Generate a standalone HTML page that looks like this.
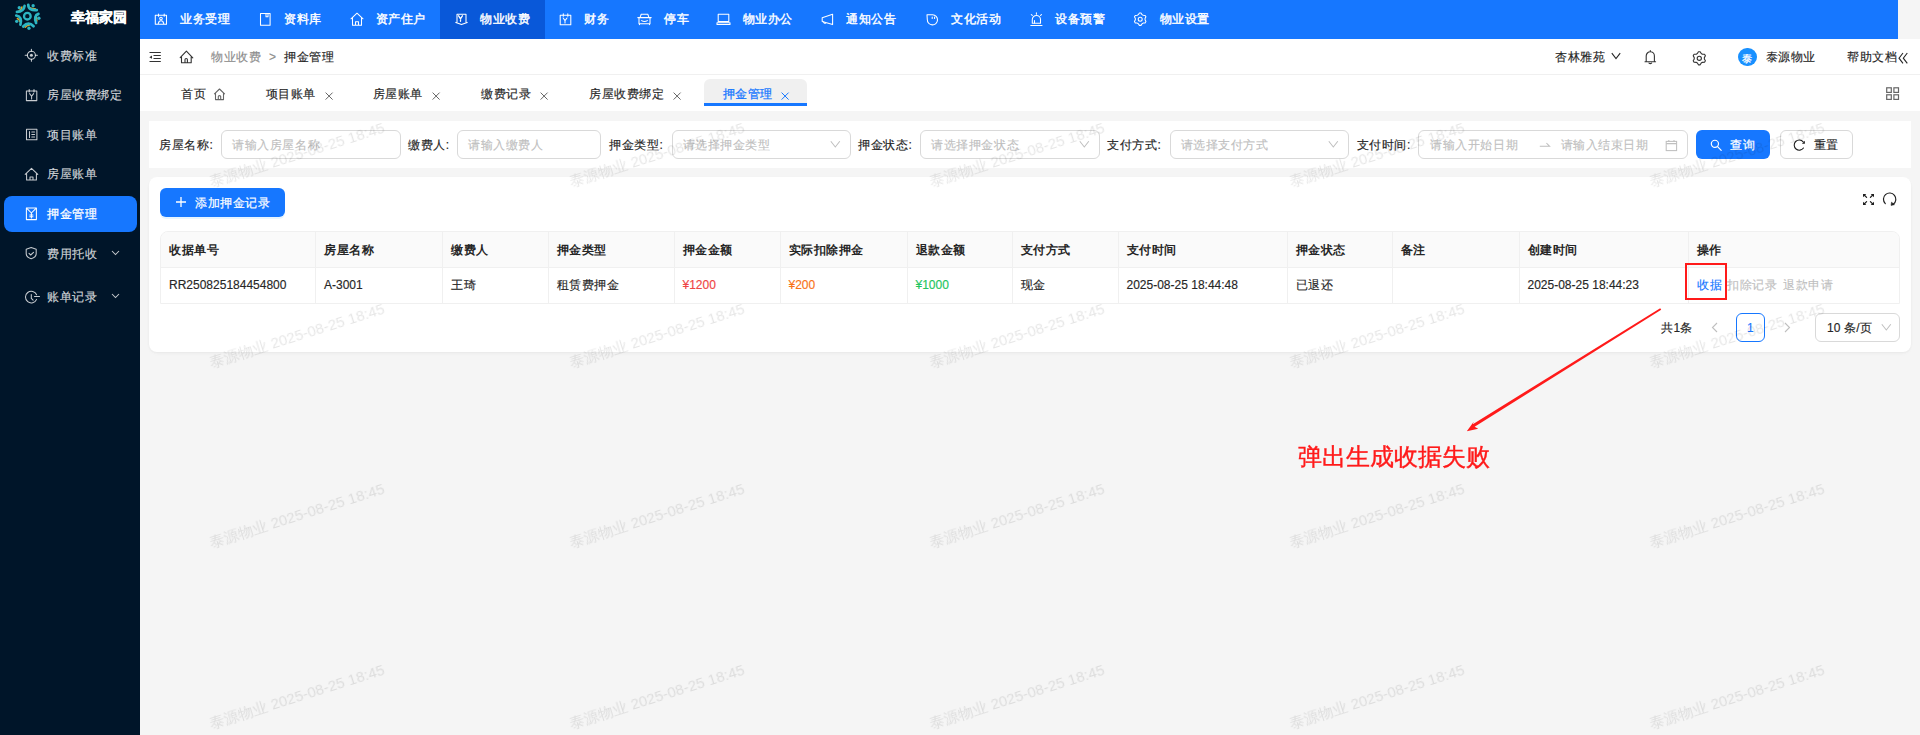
<!DOCTYPE html><html><head><meta charset="utf-8"><style>
*{box-sizing:border-box;margin:0;padding:0}
html,body{width:1920px;height:735px;overflow:hidden;background:#f5f5f5;font-family:"Liberation Sans",sans-serif;font-size:13px;color:#262626}
body{position:relative}
.a{position:absolute;white-space:nowrap}
.t{-webkit-text-stroke:0.15px currentColor}
svg.a{display:block;overflow:visible}
</style></head><body><div class="a" style="left:0px;top:0px;width:140px;height:735px;background:#001529"></div>
<div class="a" style="left:140px;top:0px;width:1758px;height:39px;background:#1677ff"></div>
<div class="a" style="left:140px;top:39px;width:1780px;height:72px;background:#fff"></div>
<div class="a" style="left:140px;top:74px;width:1780px;height:1px;background:#f0f0f0"></div>
<svg class="a" style="left:10px;top:0px;" width="40" height="34" viewBox="0 0 865 735"><g fill="none" stroke-linecap="round">
<path d="M258 150 Q 250 215 200 228" stroke="#e3a51e" stroke-width="34"/>
<path d="M440 170 Q 490 195 545 188" stroke="#e3a51e" stroke-width="34"/>
<path d="M560 345 Q 590 400 580 455" stroke="#e3a51e" stroke-width="34"/>
<path d="M330 590 Q 370 545 420 540" stroke="#e3a51e" stroke-width="34"/>
<path d="M160 400 Q 205 420 215 465" stroke="#e3a51e" stroke-width="34"/>
<circle cx="375" cy="350" r="72" stroke="#2cb5c4" stroke-width="50"/>
<path d="M315 125 Q 300 250 150 258" stroke="#2cb5c4" stroke-width="58"/>
<path d="M395 105 Q 395 235 580 218" stroke="#2cb5c4" stroke-width="58"/>
<path d="M615 300 Q 505 340 565 495" stroke="#2cb5c4" stroke-width="58"/>
<path d="M285 572 Q 400 450 510 568" stroke="#2cb5c4" stroke-width="58"/>
<path d="M135 335 Q 275 365 225 535" stroke="#2cb5c4" stroke-width="58"/>
</g><g fill="#2cb5c4"><circle cx="200" cy="165" r="36"/><circle cx="500" cy="125" r="36"/><circle cx="625" cy="395" r="36"/><circle cx="410" cy="610" r="36"/><circle cx="145" cy="462" r="36"/></g></svg>
<div class="a" style="left:70.5px;top:8.5px;font-size:14px;line-height:16px;color:#fff;font-weight:bold;-webkit-text-stroke:0.35px #fff">幸福家园</div>
<div class="a" style="left:4px;top:196px;width:133px;height:36px;background:#1677ff;border-radius:8px"></div>
<svg class="a" style="left:24px;top:48px;color:rgba(255,255,255,0.78)" width="16" height="16" viewBox="0 0 16 16"><circle cx="7.4" cy="7.2" r="4" stroke="currentColor" stroke-width="1.05" fill="none" stroke-linejoin="round" stroke-linecap="round"/><circle cx="7.4" cy="7.2" r="1.5" fill="currentColor"/><path d="M7.4 1.2v2M7.4 11.2v2M1.2 7.2h2M11.4 7.2h2" stroke="currentColor" stroke-width="1.05" fill="none" stroke-linejoin="round" stroke-linecap="round"/></svg>
<div class="a t" style="left:47px;top:48px;font-size:12px;line-height:16px;color:rgba(255,255,255,0.78);font-weight:normal;"><span style="letter-spacing:0.6px">收费标准</span></div>
<svg class="a" style="left:24px;top:88px;color:rgba(255,255,255,0.78)" width="16" height="16" viewBox="0 0 16 16"><rect x="2.4" y="3" width="10.4" height="9.6" stroke="currentColor" stroke-width="1.05" fill="none" stroke-linejoin="round" stroke-linecap="round"/><path d="M5.2 1.6v2.4M10 1.6v2.4M5.6 5.6l2 2.6 2-2.6M7.6 8.2v2.8" stroke="currentColor" stroke-width="1.05" fill="none" stroke-linejoin="round" stroke-linecap="round"/></svg>
<div class="a t" style="left:47px;top:87px;font-size:12px;line-height:16px;color:rgba(255,255,255,0.78);font-weight:normal;"><span style="letter-spacing:0.6px">房屋收费绑定</span></div>
<svg class="a" style="left:24px;top:127px;color:rgba(255,255,255,0.78)" width="16" height="16" viewBox="0 0 16 16"><rect x="2.5" y="2.2" width="10.4" height="10.6" stroke="currentColor" stroke-width="1.05" fill="none" stroke-linejoin="round" stroke-linecap="round"/><path d="M5.5 4.5v6M7.8 5h2.8M7.8 7.5h2.8M7.8 10h2.8" stroke="currentColor" stroke-width="1.05" fill="none" stroke-linejoin="round" stroke-linecap="round"/></svg>
<div class="a t" style="left:47px;top:127px;font-size:12px;line-height:16px;color:rgba(255,255,255,0.78);font-weight:normal;"><span style="letter-spacing:0.6px">项目账单</span></div>
<svg class="a" style="left:24px;top:167px;color:rgba(255,255,255,0.78)" width="16" height="16" viewBox="0 0 16 16"><path d="M1.2 7.4L7.5 1.4l6.3 6M2.6 6.2V13h9.8V6.2M6 13v-3h3v3" stroke="currentColor" stroke-width="1.05" fill="none" stroke-linejoin="round" stroke-linecap="round"/></svg>
<div class="a t" style="left:47px;top:166px;font-size:12px;line-height:16px;color:rgba(255,255,255,0.78);font-weight:normal;"><span style="letter-spacing:0.6px">房屋账单</span></div>
<svg class="a" style="left:24px;top:206px;color:#fff" width="16" height="16" viewBox="0 0 16 16"><rect x="2.4" y="2" width="10" height="11.6" stroke="currentColor" stroke-width="1.05" fill="none" stroke-linejoin="round" stroke-linecap="round"/><path d="M2.8 2.4L7.4 7l4.6-4.6M7.4 7v5M5.8 9h3.2M5.8 10.8h3.2" stroke="currentColor" stroke-width="1.05" fill="none" stroke-linejoin="round" stroke-linecap="round"/></svg>
<div class="a" style="left:47px;top:206px;font-size:12px;line-height:16px;color:#fff;font-weight:normal;-webkit-text-stroke:0.3px #fff"><span style="letter-spacing:0.6px">押金管理</span></div>
<svg class="a" style="left:24px;top:246px;color:rgba(255,255,255,0.78)" width="16" height="16" viewBox="0 0 16 16"><path d="M7.2 1.6L12.2 3.2V7.6c0 2.6-2 4.2-5 5.1-3-0.9-5-2.5-5-5.1V3.2z" stroke="currentColor" stroke-width="1.05" fill="none" stroke-linejoin="round" stroke-linecap="round"/><path d="M5 7.4l1.7 1.6L9.5 6.4" stroke="currentColor" stroke-width="1.05" fill="none" stroke-linejoin="round" stroke-linecap="round"/></svg>
<div class="a t" style="left:47px;top:246px;font-size:12px;line-height:16px;color:rgba(255,255,255,0.78);font-weight:normal;"><span style="letter-spacing:0.6px">费用托收</span></div>
<svg class="a" style="left:111px;top:250px;color:rgba(255,255,255,0.78)" width="9" height="6" viewBox="0 0 9 6"><path d="M1 1l3.5 3.5L8 1" stroke="currentColor" stroke-width="1.05" fill="none"/></svg>
<svg class="a" style="left:24px;top:290px;color:rgba(255,255,255,0.78)" width="16" height="16" viewBox="0 0 16 16"><path d="M12.6 4.8A5.8 5.8 0 1 0 12.6 9.4" stroke="currentColor" stroke-width="1.05" fill="none" stroke-linejoin="round" stroke-linecap="round"/><path d="M7.3 4.4v4l1.8 1.8M10.5 6.5h5" stroke="currentColor" stroke-width="1.05" fill="none" stroke-linejoin="round" stroke-linecap="round"/></svg>
<div class="a t" style="left:47px;top:289px;font-size:12px;line-height:16px;color:rgba(255,255,255,0.78);font-weight:normal;"><span style="letter-spacing:0.6px">账单记录</span></div>
<svg class="a" style="left:111px;top:293px;color:rgba(255,255,255,0.78)" width="9" height="6" viewBox="0 0 9 6"><path d="M1 1l3.5 3.5L8 1" stroke="currentColor" stroke-width="1.05" fill="none"/></svg>
<div class="a" style="left:440px;top:0px;width:105px;height:39px;background:#0958d9"></div>
<svg class="a" style="left:154px;top:13px;" width="15" height="15" viewBox="0 0 15 15"><rect x="1.3" y="2.3" width="11.2" height="8.9" stroke="#fff" stroke-width="1.05" fill="none" stroke-linejoin="round" stroke-linecap="round"/><path d="M4.5 1v2.2M10.2 1v2.2" stroke="#fff" stroke-width="1.05" fill="none" stroke-linejoin="round" stroke-linecap="round"/><circle cx="7" cy="5.6" r="1.3" stroke="#fff" stroke-width="1.05" fill="none" stroke-linejoin="round" stroke-linecap="round"/><path d="M4.3 10.6Q4.8 7.8 7 7.8T9.7 10.6" stroke="#fff" stroke-width="1.05" fill="none" stroke-linejoin="round" stroke-linecap="round"/></svg>
<div class="a" style="left:180px;top:11px;font-size:12px;line-height:16px;color:#fff;font-weight:normal;-webkit-text-stroke:0.4px #fff"><span style="letter-spacing:0.6px">业务受理</span></div>
<svg class="a" style="left:259px;top:12px;" width="15" height="15" viewBox="0 0 15 15"><rect x="1.5" y="1.5" width="9.6" height="11.8" stroke="#fff" stroke-width="1.05" fill="none" stroke-linejoin="round" stroke-linecap="round"/><path d="M7 1.5V4.8h2V1.5" stroke="#fff" stroke-width="1.05" fill="none" stroke-linejoin="round" stroke-linecap="round"/></svg>
<div class="a" style="left:284px;top:11px;font-size:12px;line-height:16px;color:#fff;font-weight:normal;-webkit-text-stroke:0.4px #fff"><span style="letter-spacing:0.6px">资料库</span></div>
<svg class="a" style="left:350px;top:12px;" width="15" height="15" viewBox="0 0 15 15"><path d="M1 6.8L7 1.2l6 5.6M2.5 5.6V13.2h9V5.6M5.5 13.2V9.8h3v3.4" stroke="#fff" stroke-width="1.05" fill="none" stroke-linejoin="round" stroke-linecap="round"/></svg>
<div class="a" style="left:375.5px;top:11px;font-size:12px;line-height:16px;color:#fff;font-weight:normal;-webkit-text-stroke:0.4px #fff"><span style="letter-spacing:0.6px">资产住户</span></div>
<svg class="a" style="left:455px;top:13px;" width="15" height="15" viewBox="0 0 15 15"><path d="M2 9.4V1.2h9V9.4M0.8 9.4L6.5 11.6 12.2 9.4" stroke="#fff" stroke-width="1.05" fill="none" stroke-linejoin="round" stroke-linecap="round"/><path d="M3.6 2.8L5.5 5.8 7.4 2.8M5.5 5.8V8.3" stroke="#fff" stroke-width="1.3" fill="none" stroke-linecap="round"/></svg>
<div class="a" style="left:480px;top:11px;font-size:12px;line-height:16px;color:#fff;font-weight:normal;-webkit-text-stroke:0.4px #fff"><span style="letter-spacing:0.6px">物业收费</span></div>
<svg class="a" style="left:559px;top:13px;" width="15" height="15" viewBox="0 0 15 15"><rect x="1.2" y="2.2" width="10.6" height="9.6" stroke="#fff" stroke-width="1.05" fill="none" stroke-linejoin="round" stroke-linecap="round"/><path d="M4.3 0.8v2.4M8.8 0.8v2.4" stroke="#fff" stroke-width="1.05" fill="none" stroke-linejoin="round" stroke-linecap="round"/><path d="M4.2 5L6 7.6 8 5M6 7.6V10" stroke="#fff" stroke-width="1.05" fill="none" stroke-linejoin="round" stroke-linecap="round"/></svg>
<div class="a" style="left:584px;top:11px;font-size:12px;line-height:16px;color:#fff;font-weight:normal;-webkit-text-stroke:0.4px #fff"><span style="letter-spacing:0.6px">财务</span></div>
<svg class="a" style="left:637px;top:13px;" width="15" height="15" viewBox="0 0 15 15"><path d="M3 4.6L4.2 1.3h6.6l1.2 3.3M2 4.6h11v6.2H2zM0.8 4.6H2M13 4.6h1.2M2.5 10.8v0.8M12.5 10.8v0.8M4.6 7.6Q7.5 9.4 10.4 7.6" stroke="#fff" stroke-width="1.05" fill="none" stroke-linejoin="round" stroke-linecap="round"/></svg>
<div class="a" style="left:664px;top:11px;font-size:12px;line-height:16px;color:#fff;font-weight:normal;-webkit-text-stroke:0.4px #fff"><span style="letter-spacing:0.6px">停车</span></div>
<svg class="a" style="left:716px;top:13px;" width="15" height="15" viewBox="0 0 15 15"><rect x="2.2" y="1.2" width="10.6" height="7.4" stroke="#fff" stroke-width="1.05" fill="none" stroke-linejoin="round" stroke-linecap="round"/><path d="M1 9.8h13v1.6H1z" stroke="#fff" stroke-width="1.05" fill="none" stroke-linejoin="round" stroke-linecap="round"/></svg>
<div class="a" style="left:742.5px;top:11px;font-size:12px;line-height:16px;color:#fff;font-weight:normal;-webkit-text-stroke:0.4px #fff"><span style="letter-spacing:0.6px">物业办公</span></div>
<svg class="a" style="left:821px;top:13px;" width="15" height="15" viewBox="0 0 15 15"><path d="M1.2 4.8L11.6 1.2V11.6L1.2 8.4Z" stroke="#fff" stroke-width="1.05" fill="none" stroke-linejoin="round" stroke-linecap="round"/><path d="M2.6 8.8Q2.8 10.6 4.6 10.2" stroke="#fff" stroke-width="1.05" fill="none" stroke-linejoin="round" stroke-linecap="round"/></svg>
<div class="a" style="left:846px;top:11px;font-size:12px;line-height:16px;color:#fff;font-weight:normal;-webkit-text-stroke:0.4px #fff"><span style="letter-spacing:0.6px">通知公告</span></div>
<svg class="a" style="left:926px;top:13px;" width="15" height="15" viewBox="0 0 15 15"><path d="M1 1.7H6.6A5.1 5.1 0 1 1 1.3 6.6Z" stroke="#fff" stroke-width="1.05" fill="none" stroke-linejoin="round" stroke-linecap="round"/><path d="M6.2 4.1v1.4M8.6 4.1v1.4" stroke="#fff" stroke-width="1.05" fill="none" stroke-linejoin="round" stroke-linecap="round"/></svg>
<div class="a" style="left:951px;top:11px;font-size:12px;line-height:16px;color:#fff;font-weight:normal;-webkit-text-stroke:0.4px #fff"><span style="letter-spacing:0.6px">文化活动</span></div>
<svg class="a" style="left:1030px;top:12px;" width="15" height="15" viewBox="0 0 15 15"><path d="M2.3 11.3V7.6A4.1 4.1 0 0 1 10.5 7.6V11.3Z" stroke="#fff" stroke-width="1.05" fill="none" stroke-linejoin="round" stroke-linecap="round"/><path d="M0.8 13.4H12M6.4 0.8V2.2M1.3 2.6l1 0.8M11.5 2.6l-1 0.8M4.5 8.5V11" stroke="#fff" stroke-width="1.05" fill="none" stroke-linejoin="round" stroke-linecap="round"/></svg>
<div class="a" style="left:1055px;top:11px;font-size:12px;line-height:16px;color:#fff;font-weight:normal;-webkit-text-stroke:0.4px #fff"><span style="letter-spacing:0.6px">设备预警</span></div>
<svg class="a" style="left:1133px;top:12px;" width="15" height="15" viewBox="0 0 15 15"><path d="M6.39 1.05 L8.01 1.05 L9.08 2.67 L10.18 3.31 L12.12 3.43 L12.93 4.83 L12.06 6.56 L12.06 7.84 L12.93 9.57 L12.12 10.97 L10.18 11.09 L9.08 11.73 L8.01 13.35 L6.39 13.35 L5.32 11.73 L4.22 11.09 L2.28 10.97 L1.47 9.57 L2.34 7.84 L2.34 6.56 L1.47 4.83 L2.28 3.43 L4.22 3.31 L5.32 2.67Z" stroke="#fff" stroke-width="1.05" fill="none" stroke-linejoin="round" stroke-linecap="round"/><circle cx="7.2" cy="7.2" r="2" stroke="#fff" stroke-width="1.05" fill="none" stroke-linejoin="round" stroke-linecap="round"/></svg>
<div class="a" style="left:1159.5px;top:11px;font-size:12px;line-height:16px;color:#fff;font-weight:normal;-webkit-text-stroke:0.4px #fff"><span style="letter-spacing:0.6px">物业设置</span></div>
<svg class="a" style="left:148px;top:50px;" width="15" height="14" viewBox="0 0 15 14"><path d="M1.5 2.5H12.8M5.5 5.5H12.8M5.5 8.5H12.8M1.5 11.5H12.8" stroke="#333" stroke-width="1.1"/><path d="M1.3 7.2L4 5.6V8.8Z" fill="#333"/></svg>
<svg class="a" style="left:179px;top:50px;" width="15" height="14" viewBox="0 0 15 14"><path d="M1.2 7.6L7.4 1.2L13.8 7.8M2.5 7V12.7H12.2V7M6 12.7V9.6Q6 8.5 7.2 8.5Q8.4 8.5 8.4 9.6V12.7" stroke="#333" stroke-width="1.1" fill="none" stroke-linejoin="round" stroke-linecap="round" stroke-width="1.2"/></svg>
<div class="a t" style="left:211px;top:49px;font-size:12px;line-height:16px;color:#8c8c8c;font-weight:normal;"><span style="letter-spacing:0.6px">物业收费</span></div>
<div class="a t" style="left:269px;top:49px;font-size:12px;line-height:16px;color:#8c8c8c;font-weight:normal;">&gt;</div>
<div class="a t" style="left:284px;top:49px;font-size:12px;line-height:16px;color:#262626;font-weight:normal;"><span style="letter-spacing:0.6px">押金管理</span></div>
<div class="a t" style="left:1555px;top:49px;font-size:12px;line-height:16px;color:#262626;font-weight:normal;"><span style="letter-spacing:0.6px">杏林雅苑</span></div>
<svg class="a" style="left:1611px;top:52px;" width="10" height="8" viewBox="0 0 10 8"><path d="M0.8 1.2L5 6.5l4.2-5.3" stroke="#262626" stroke-width="1.1" fill="none"/></svg>
<svg class="a" style="left:1644px;top:50px;" width="14" height="15" viewBox="0 0 14 15"><path d="M2.2 11.4V5.9A4.1 4.1 0 0 1 10.4 5.9V11.4M1 11.8H11.6M6.3 0.6V1.8M5 13.1Q6.3 14.1 7.6 13.1" stroke="#333" stroke-width="1.1" fill="none" stroke-linejoin="round" stroke-linecap="round"/></svg>
<svg class="a" style="left:1692px;top:50px;" width="16" height="16" viewBox="0 0 16 16"><path d="M6.44 1.76 L8.16 1.76 L9.25 3.59 L10.40 4.25 L12.54 4.28 L13.40 5.77 L12.36 7.63 L12.36 8.97 L13.40 10.83 L12.54 12.32 L10.40 12.35 L9.25 13.01 L8.16 14.84 L6.44 14.84 L5.35 13.01 L4.20 12.35 L2.06 12.32 L1.20 10.83 L2.24 8.97 L2.24 7.63 L1.20 5.77 L2.06 4.28 L4.20 4.25 L5.35 3.59Z" stroke="#333" stroke-width="1.1" fill="none" stroke-linejoin="round" stroke-linecap="round" stroke-width="1.2"/><circle cx="7.3" cy="8.3" r="2.1" stroke="#333" stroke-width="1.1" fill="none" stroke-linejoin="round" stroke-linecap="round" stroke-width="1.2"/></svg>
<div class="a" style="left:1738px;top:47.5px;width:18.5px;height:18.5px;background:#1890ff;border-radius:50%;color:#fff;font-size:10px;line-height:21px;text-align:center;-webkit-text-stroke:0.3px #fff">泰</div>
<div class="a t" style="left:1765.5px;top:49px;font-size:12px;line-height:16px;color:#262626;font-weight:normal;"><span style="letter-spacing:0.6px">泰源物业</span></div>
<div class="a t" style="left:1847px;top:49px;font-size:12px;line-height:16px;color:#262626;font-weight:normal;"><span style="letter-spacing:0.6px">帮助文档</span></div>
<svg class="a" style="left:1898px;top:52px;" width="11" height="13" viewBox="0 0 11 13"><path d="M5 1L1 6.2L5 11.3M9.3 1L5.3 6.2L9.3 11.3" stroke="#262626" stroke-width="1.1" fill="none"/></svg>
<div class="a" style="left:704px;top:79px;width:103px;height:27px;background:#f0f0f0;border-radius:6px 6px 0 0"></div>
<div class="a" style="left:704px;top:103px;width:103px;height:2.5px;background:#1677ff"></div>
<div class="a t" style="left:181px;top:86px;font-size:12px;line-height:16px;color:#262626;font-weight:normal;"><span style="letter-spacing:0.6px">首页</span></div>
<svg class="a" style="left:213px;top:88px;" width="13" height="13" viewBox="0 0 13 13"><path d="M1.2 6.1L6.5 1L11.8 6.1M2.5 5.2V11.6H10.5V5.2M5.3 11.6V8.6Q5.3 7.6 6.5 7.6Q7.7 7.6 7.7 8.6V11.6" stroke="#666" stroke-width="1.1" fill="none" stroke-linejoin="round"/></svg>
<div class="a t" style="left:265.5px;top:86px;font-size:12px;line-height:16px;color:#262626;font-weight:normal;"><span style="letter-spacing:0.6px">项目账单</span></div>
<svg class="a" style="left:324.5px;top:91.5px;" width="8" height="8" viewBox="0 0 8 8"><path d="M0.6 0.6l7 7M7.6 0.6L0.6 7.6" stroke="#666" stroke-width="1"/></svg>
<div class="a t" style="left:372.5px;top:86px;font-size:12px;line-height:16px;color:#262626;font-weight:normal;"><span style="letter-spacing:0.6px">房屋账单</span></div>
<svg class="a" style="left:431.5px;top:91.5px;" width="8" height="8" viewBox="0 0 8 8"><path d="M0.6 0.6l7 7M7.6 0.6L0.6 7.6" stroke="#666" stroke-width="1"/></svg>
<div class="a t" style="left:481px;top:86px;font-size:12px;line-height:16px;color:#262626;font-weight:normal;"><span style="letter-spacing:0.6px">缴费记录</span></div>
<svg class="a" style="left:540.0px;top:91.5px;" width="8" height="8" viewBox="0 0 8 8"><path d="M0.6 0.6l7 7M7.6 0.6L0.6 7.6" stroke="#666" stroke-width="1"/></svg>
<div class="a t" style="left:589px;top:86px;font-size:12px;line-height:16px;color:#262626;font-weight:normal;"><span style="letter-spacing:0.6px">房屋收费绑定</span></div>
<svg class="a" style="left:673.0px;top:91.5px;" width="8" height="8" viewBox="0 0 8 8"><path d="M0.6 0.6l7 7M7.6 0.6L0.6 7.6" stroke="#666" stroke-width="1"/></svg>
<div class="a" style="left:722.5px;top:86px;font-size:12px;line-height:16px;color:#1677ff;font-weight:normal;-webkit-text-stroke:0.25px #1677ff"><span style="letter-spacing:0.6px">押金管理</span></div>
<svg class="a" style="left:780.5px;top:91.5px;" width="8" height="8" viewBox="0 0 8 8"><path d="M0.6 0.6l7 7M7.6 0.6L0.6 7.6" stroke="#1677ff" stroke-width="1"/></svg>
<svg class="a" style="left:1886px;top:87px;" width="14" height="14" viewBox="0 0 14 14"><rect x="0.7" y="0.8" width="4.6" height="4.6" stroke="#666" stroke-width="1.2" fill="none"/><rect x="7.9" y="0.8" width="4.6" height="4.6" stroke="#666" stroke-width="1.2" fill="none"/><rect x="0.7" y="7.8" width="4.6" height="4.6" stroke="#666" stroke-width="1.2" fill="none"/><rect x="7.9" y="7.8" width="4.6" height="4.6" stroke="#666" stroke-width="1.2" fill="none"/></svg>
<div class="a" style="left:149px;top:121px;width:1762px;height:47px;background:#fff"></div>
<div class="a t" style="left:159px;top:137px;font-size:12px;line-height:16px;color:#262626;font-weight:normal;"><span style="letter-spacing:0.6px">房屋名称</span>:</div>
<div class="a" style="left:221px;top:130px;width:180px;height:29px;border:1px solid #d9d9d9;border-radius:6px;background:#fff"></div>
<div class="a t" style="left:232px;top:137px;font-size:12px;line-height:16px;color:#bfbfbf;font-weight:normal;"><span style="letter-spacing:0.6px">请输入房屋名称</span></div>
<div class="a t" style="left:408px;top:137px;font-size:12px;line-height:16px;color:#262626;font-weight:normal;"><span style="letter-spacing:0.6px">缴费人</span>:</div>
<div class="a" style="left:457px;top:130px;width:144px;height:29px;border:1px solid #d9d9d9;border-radius:6px;background:#fff"></div>
<div class="a t" style="left:468px;top:137px;font-size:12px;line-height:16px;color:#bfbfbf;font-weight:normal;"><span style="letter-spacing:0.6px">请输入缴费人</span></div>
<div class="a t" style="left:609px;top:137px;font-size:12px;line-height:16px;color:#262626;font-weight:normal;"><span style="letter-spacing:0.6px">押金类型</span>:</div>
<div class="a" style="left:671.5px;top:130px;width:179px;height:29px;border:1px solid #d9d9d9;border-radius:6px;background:#fff"></div>
<div class="a t" style="left:682.5px;top:137px;font-size:12px;line-height:16px;color:#bfbfbf;font-weight:normal;"><span style="letter-spacing:0.6px">请选择押金类型</span></div>
<svg class="a" style="left:829.5px;top:140px;" width="11" height="8" viewBox="0 0 11 8"><path d="M0.8 1.2L5.3 7L9.8 1.2" stroke="#bfbfbf" stroke-width="1.05" fill="none"/></svg>
<div class="a t" style="left:858px;top:137px;font-size:12px;line-height:16px;color:#262626;font-weight:normal;"><span style="letter-spacing:0.6px">押金状态</span>:</div>
<div class="a" style="left:920px;top:130px;width:179.5px;height:29px;border:1px solid #d9d9d9;border-radius:6px;background:#fff"></div>
<div class="a t" style="left:931px;top:137px;font-size:12px;line-height:16px;color:#bfbfbf;font-weight:normal;"><span style="letter-spacing:0.6px">请选择押金状态</span></div>
<svg class="a" style="left:1078.5px;top:140px;" width="11" height="8" viewBox="0 0 11 8"><path d="M0.8 1.2L5.3 7L9.8 1.2" stroke="#bfbfbf" stroke-width="1.05" fill="none"/></svg>
<div class="a t" style="left:1107px;top:137px;font-size:12px;line-height:16px;color:#262626;font-weight:normal;"><span style="letter-spacing:0.6px">支付方式</span>:</div>
<div class="a" style="left:1169.5px;top:130px;width:179px;height:29px;border:1px solid #d9d9d9;border-radius:6px;background:#fff"></div>
<div class="a t" style="left:1180.5px;top:137px;font-size:12px;line-height:16px;color:#bfbfbf;font-weight:normal;"><span style="letter-spacing:0.6px">请选择支付方式</span></div>
<svg class="a" style="left:1327.5px;top:140px;" width="11" height="8" viewBox="0 0 11 8"><path d="M0.8 1.2L5.3 7L9.8 1.2" stroke="#bfbfbf" stroke-width="1.05" fill="none"/></svg>
<div class="a t" style="left:1356.5px;top:137px;font-size:12px;line-height:16px;color:#262626;font-weight:normal;"><span style="letter-spacing:0.6px">支付时间</span>:</div>
<div class="a" style="left:1418px;top:130px;width:269.5px;height:29px;border:1px solid #d9d9d9;border-radius:6px;background:#fff"></div>
<div class="a t" style="left:1430px;top:137px;font-size:12px;line-height:16px;color:#bfbfbf;font-weight:normal;"><span style="letter-spacing:0.6px">请输入开始日期</span></div>
<svg class="a" style="left:1539px;top:142px;" width="12" height="6" viewBox="0 0 12 6"><path d="M0.8 4.3H10.6L7.4 1" stroke="#bfbfbf" stroke-width="1.05" fill="none"/></svg>
<div class="a t" style="left:1560.5px;top:137px;font-size:12px;line-height:16px;color:#bfbfbf;font-weight:normal;"><span style="letter-spacing:0.6px">请输入结束日期</span></div>
<svg class="a" style="left:1665px;top:139px;" width="13" height="13" viewBox="0 0 13 13"><rect x="1.2" y="2.4" width="10.4" height="9.2" stroke="#bfbfbf" stroke-width="1.05" fill="none"/><path d="M1.2 4.6H11.6M3.8 1V3M9 1V3" stroke="#bfbfbf" stroke-width="1.05"/></svg>
<div class="a" style="left:1696px;top:130px;width:74px;height:29px;background:#1677ff;border-radius:6px"></div>
<svg class="a" style="left:1710px;top:138px;" width="13" height="14" viewBox="0 0 13 14"><circle cx="4.9" cy="5.85" r="3.6" stroke="#fff" stroke-width="1.2" fill="none"/><path d="M7.6 8.6L11.2 12.4" stroke="#fff" stroke-width="1.2" stroke-linecap="round"/></svg>
<div class="a" style="left:1730px;top:137px;font-size:12px;line-height:16px;color:#fff;font-weight:normal;-webkit-text-stroke:0.25px #fff"><span style="letter-spacing:0.6px">查询</span></div>
<div class="a" style="left:1779.5px;top:130px;width:73px;height:29px;border:1px solid #d9d9d9;border-radius:6px;background:#fff"></div>
<svg class="a" style="left:1793px;top:139px;" width="14" height="14" viewBox="0 0 14 14"><path d="M10.48 9.03A5.1 5.1 0 1 1 10.2 2.82" stroke="#1f1f1f" stroke-width="1.1" fill="none" stroke-linecap="round"/><path d="M8.9 4.7L11.9 1.7V4.7Z" fill="#1f1f1f"/></svg>
<div class="a t" style="left:1813.5px;top:137px;font-size:12px;line-height:16px;color:#262626;font-weight:normal;"><span style="letter-spacing:0.6px">重置</span></div>
<div class="a" style="left:149px;top:177px;width:1762px;height:174.5px;background:#fff;border-radius:8px;box-shadow:0 1px 2px rgba(0,0,0,0.03),0 1px 6px -1px rgba(0,0,0,0.02),0 2px 4px rgba(0,0,0,0.02)"></div>
<div class="a" style="left:160px;top:188px;width:125px;height:29px;background:#1677ff;border-radius:6px;box-shadow:0 2px 0 rgba(5,145,255,0.1)"></div>
<svg class="a" style="left:176px;top:197px;" width="10" height="10" viewBox="0 0 10 10"><path d="M5 0v10M0 5h10" stroke="#fff" stroke-width="1.3"/></svg>
<div class="a" style="left:195px;top:195px;font-size:12px;line-height:16px;color:#fff;font-weight:normal;-webkit-text-stroke:0.2px #fff"><span style="letter-spacing:0.6px">添加押金记录</span></div>
<svg class="a" style="left:1862px;top:193px;" width="13" height="13" viewBox="0 0 13 13"><path d="M4.6 4.4L2.2 2M8.4 4.4L10.8 2M4.6 8.6L2.2 11M8.4 8.6L10.8 11" stroke="#1f1f1f" stroke-width="1.2" stroke-linecap="round"/><path d="M1 1H4.3L1 4.3Z M12 1H8.7L12 4.3Z M1 12H4.3L1 8.7Z M12 12H8.7L12 8.7Z" fill="#1f1f1f"/></svg>
<svg class="a" style="left:1882px;top:192px;" width="15" height="15" viewBox="0 0 15 15"><path d="M3.3 11.6A6.2 6.2 0 1 1 11.3 12.2" stroke="#1f1f1f" stroke-width="1.2" fill="none" stroke-linecap="round"/><path d="M9.1 13.4L9.5 10.2L12.4 12.6Z" fill="#1f1f1f" stroke="#1f1f1f" stroke-width="0.6" stroke-linejoin="round"/></svg>
<div class="a" style="left:160px;top:231px;width:1740px;height:72.5px;border:1px solid #f0f0f0;border-radius:8px 8px 0 0;background:#fff;overflow:hidden"></div>
<div class="a" style="left:161px;top:232px;width:1738px;height:35px;background:#fafafa;border-radius:7px 7px 0 0"></div>
<div class="a" style="left:160px;top:266.5px;width:1740px;height:1px;background:#f0f0f0"></div>
<div class="a" style="left:315px;top:231px;width:1px;height:72.5px;background:#f0f0f0"></div>
<div class="a" style="left:442px;top:231px;width:1px;height:72.5px;background:#f0f0f0"></div>
<div class="a" style="left:548px;top:231px;width:1px;height:72.5px;background:#f0f0f0"></div>
<div class="a" style="left:674px;top:231px;width:1px;height:72.5px;background:#f0f0f0"></div>
<div class="a" style="left:780px;top:231px;width:1px;height:72.5px;background:#f0f0f0"></div>
<div class="a" style="left:907px;top:231px;width:1px;height:72.5px;background:#f0f0f0"></div>
<div class="a" style="left:1012px;top:231px;width:1px;height:72.5px;background:#f0f0f0"></div>
<div class="a" style="left:1118px;top:231px;width:1px;height:72.5px;background:#f0f0f0"></div>
<div class="a" style="left:1287px;top:231px;width:1px;height:72.5px;background:#f0f0f0"></div>
<div class="a" style="left:1392px;top:231px;width:1px;height:72.5px;background:#f0f0f0"></div>
<div class="a" style="left:1519px;top:231px;width:1px;height:72.5px;background:#f0f0f0"></div>
<div class="a" style="left:1688px;top:231px;width:1px;height:72.5px;background:#f0f0f0"></div>
<div class="a" style="left:169px;top:242px;font-size:12px;line-height:16px;color:#262626;font-weight:bold;"><span style="letter-spacing:0.6px">收据单号</span></div>
<div class="a t" style="left:169px;top:277px;font-size:12px;line-height:16px;color:#262626;font-weight:normal;">RR250825184454800</div>
<div class="a" style="left:324px;top:242px;font-size:12px;line-height:16px;color:#262626;font-weight:bold;"><span style="letter-spacing:0.6px">房屋名称</span></div>
<div class="a t" style="left:324px;top:277px;font-size:12px;line-height:16px;color:#262626;font-weight:normal;">A-3001</div>
<div class="a" style="left:451px;top:242px;font-size:12px;line-height:16px;color:#262626;font-weight:bold;"><span style="letter-spacing:0.6px">缴费人</span></div>
<div class="a t" style="left:451px;top:277px;font-size:12px;line-height:16px;color:#262626;font-weight:normal;"><span style="letter-spacing:0.6px">王琦</span></div>
<div class="a" style="left:556.5px;top:242px;font-size:12px;line-height:16px;color:#262626;font-weight:bold;"><span style="letter-spacing:0.6px">押金类型</span></div>
<div class="a t" style="left:556.5px;top:277px;font-size:12px;line-height:16px;color:#262626;font-weight:normal;"><span style="letter-spacing:0.6px">租赁费押金</span></div>
<div class="a" style="left:682.5px;top:242px;font-size:12px;line-height:16px;color:#262626;font-weight:bold;"><span style="letter-spacing:0.6px">押金金额</span></div>
<div class="a t" style="left:682.5px;top:277px;font-size:12px;line-height:16px;color:#ef4444;font-weight:normal;">¥1200</div>
<div class="a" style="left:788.5px;top:242px;font-size:12px;line-height:16px;color:#262626;font-weight:bold;"><span style="letter-spacing:0.6px">实际扣除押金</span></div>
<div class="a t" style="left:788.5px;top:277px;font-size:12px;line-height:16px;color:#f97316;font-weight:normal;">¥200</div>
<div class="a" style="left:915.5px;top:242px;font-size:12px;line-height:16px;color:#262626;font-weight:bold;"><span style="letter-spacing:0.6px">退款金额</span></div>
<div class="a t" style="left:915.5px;top:277px;font-size:12px;line-height:16px;color:#22c55e;font-weight:normal;">¥1000</div>
<div class="a" style="left:1020.5px;top:242px;font-size:12px;line-height:16px;color:#262626;font-weight:bold;"><span style="letter-spacing:0.6px">支付方式</span></div>
<div class="a t" style="left:1020.5px;top:277px;font-size:12px;line-height:16px;color:#262626;font-weight:normal;"><span style="letter-spacing:0.6px">现金</span></div>
<div class="a" style="left:1126.5px;top:242px;font-size:12px;line-height:16px;color:#262626;font-weight:bold;"><span style="letter-spacing:0.6px">支付时间</span></div>
<div class="a t" style="left:1126.5px;top:277px;font-size:12px;line-height:16px;color:#262626;font-weight:normal;">2025-08-25 18:44:48</div>
<div class="a" style="left:1295.5px;top:242px;font-size:12px;line-height:16px;color:#262626;font-weight:bold;"><span style="letter-spacing:0.6px">押金状态</span></div>
<div class="a t" style="left:1295.5px;top:277px;font-size:12px;line-height:16px;color:#262626;font-weight:normal;"><span style="letter-spacing:0.6px">已退还</span></div>
<div class="a" style="left:1400.5px;top:242px;font-size:12px;line-height:16px;color:#262626;font-weight:bold;"><span style="letter-spacing:0.6px">备注</span></div>
<div class="a" style="left:1527.5px;top:242px;font-size:12px;line-height:16px;color:#262626;font-weight:bold;"><span style="letter-spacing:0.6px">创建时间</span></div>
<div class="a t" style="left:1527.5px;top:277px;font-size:12px;line-height:16px;color:#262626;font-weight:normal;">2025-08-25 18:44:23</div>
<div class="a" style="left:1696.5px;top:242px;font-size:12px;line-height:16px;color:#262626;font-weight:bold;"><span style="letter-spacing:0.6px">操作</span></div>
<div class="a t" style="left:1697px;top:277px;font-size:12px;line-height:16px;color:#1677ff;font-weight:normal;"><span style="letter-spacing:0.6px">收据</span></div>
<div class="a t" style="left:1727px;top:277px;font-size:12px;line-height:16px;color:#bfbfbf;font-weight:normal;"><span style="letter-spacing:0.6px">扣除记录</span></div>
<div class="a t" style="left:1783px;top:277px;font-size:12px;line-height:16px;color:#bfbfbf;font-weight:normal;"><span style="letter-spacing:0.6px">退款申请</span></div>
<div class="a t" style="left:1661px;top:320px;font-size:12px;line-height:16px;color:#262626;font-weight:normal;"><span style="letter-spacing:0.6px">共</span>1<span style="letter-spacing:0.6px">条</span></div>
<svg class="a" style="left:1711px;top:322px;" width="7" height="11" viewBox="0 0 7 11"><path d="M6 1L1.5 5.5 6 10" stroke="#bfbfbf" stroke-width="1.1" fill="none"/></svg>
<div class="a" style="left:1736px;top:313px;width:28.5px;height:28.5px;border:1px solid #1677ff;border-radius:6px;background:#fff"></div>
<div class="a t" style="left:1747px;top:320px;font-size:12px;line-height:16px;color:#1677ff;font-weight:normal;">1</div>
<svg class="a" style="left:1783.5px;top:322px;" width="7" height="11" viewBox="0 0 7 11"><path d="M1 1l4.5 4.5L1 10" stroke="#bfbfbf" stroke-width="1.1" fill="none"/></svg>
<div class="a" style="left:1815px;top:313px;width:84.5px;height:28.5px;border:1px solid #d9d9d9;border-radius:6px;background:#fff"></div>
<div class="a t" style="left:1827px;top:320px;font-size:12px;line-height:16px;color:#262626;font-weight:normal;">10 <span style="letter-spacing:0.6px">条</span>/<span style="letter-spacing:0.6px">页</span></div>
<svg class="a" style="left:1881px;top:322.5px;" width="11" height="8" viewBox="0 0 11 8"><path d="M0.8 1.2L5.3 7L9.8 1.2" stroke="#bfbfbf" stroke-width="1.05" fill="none"/></svg>
<div class="a" style="left:212px;top:174.0px;font-size:15px;line-height:15px;color:rgba(0,0,0,0.1);transform-origin:0 100%;transform:rotate(-17.5deg);will-change:transform;pointer-events:none">泰源物业 2025-08-25 18:45</div>
<div class="a" style="left:572px;top:174.0px;font-size:15px;line-height:15px;color:rgba(0,0,0,0.1);transform-origin:0 100%;transform:rotate(-17.5deg);will-change:transform;pointer-events:none">泰源物业 2025-08-25 18:45</div>
<div class="a" style="left:932px;top:174.0px;font-size:15px;line-height:15px;color:rgba(0,0,0,0.1);transform-origin:0 100%;transform:rotate(-17.5deg);will-change:transform;pointer-events:none">泰源物业 2025-08-25 18:45</div>
<div class="a" style="left:1292px;top:174.0px;font-size:15px;line-height:15px;color:rgba(0,0,0,0.1);transform-origin:0 100%;transform:rotate(-17.5deg);will-change:transform;pointer-events:none">泰源物业 2025-08-25 18:45</div>
<div class="a" style="left:1652px;top:174.0px;font-size:15px;line-height:15px;color:rgba(0,0,0,0.1);transform-origin:0 100%;transform:rotate(-17.5deg);will-change:transform;pointer-events:none">泰源物业 2025-08-25 18:45</div>
<div class="a" style="left:212px;top:354.5px;font-size:15px;line-height:15px;color:rgba(0,0,0,0.1);transform-origin:0 100%;transform:rotate(-17.5deg);will-change:transform;pointer-events:none">泰源物业 2025-08-25 18:45</div>
<div class="a" style="left:572px;top:354.5px;font-size:15px;line-height:15px;color:rgba(0,0,0,0.1);transform-origin:0 100%;transform:rotate(-17.5deg);will-change:transform;pointer-events:none">泰源物业 2025-08-25 18:45</div>
<div class="a" style="left:932px;top:354.5px;font-size:15px;line-height:15px;color:rgba(0,0,0,0.1);transform-origin:0 100%;transform:rotate(-17.5deg);will-change:transform;pointer-events:none">泰源物业 2025-08-25 18:45</div>
<div class="a" style="left:1292px;top:354.5px;font-size:15px;line-height:15px;color:rgba(0,0,0,0.1);transform-origin:0 100%;transform:rotate(-17.5deg);will-change:transform;pointer-events:none">泰源物业 2025-08-25 18:45</div>
<div class="a" style="left:1652px;top:354.5px;font-size:15px;line-height:15px;color:rgba(0,0,0,0.1);transform-origin:0 100%;transform:rotate(-17.5deg);will-change:transform;pointer-events:none">泰源物业 2025-08-25 18:45</div>
<div class="a" style="left:212px;top:535.0px;font-size:15px;line-height:15px;color:rgba(0,0,0,0.1);transform-origin:0 100%;transform:rotate(-17.5deg);will-change:transform;pointer-events:none">泰源物业 2025-08-25 18:45</div>
<div class="a" style="left:572px;top:535.0px;font-size:15px;line-height:15px;color:rgba(0,0,0,0.1);transform-origin:0 100%;transform:rotate(-17.5deg);will-change:transform;pointer-events:none">泰源物业 2025-08-25 18:45</div>
<div class="a" style="left:932px;top:535.0px;font-size:15px;line-height:15px;color:rgba(0,0,0,0.1);transform-origin:0 100%;transform:rotate(-17.5deg);will-change:transform;pointer-events:none">泰源物业 2025-08-25 18:45</div>
<div class="a" style="left:1292px;top:535.0px;font-size:15px;line-height:15px;color:rgba(0,0,0,0.1);transform-origin:0 100%;transform:rotate(-17.5deg);will-change:transform;pointer-events:none">泰源物业 2025-08-25 18:45</div>
<div class="a" style="left:1652px;top:535.0px;font-size:15px;line-height:15px;color:rgba(0,0,0,0.1);transform-origin:0 100%;transform:rotate(-17.5deg);will-change:transform;pointer-events:none">泰源物业 2025-08-25 18:45</div>
<div class="a" style="left:212px;top:715.5px;font-size:15px;line-height:15px;color:rgba(0,0,0,0.1);transform-origin:0 100%;transform:rotate(-17.5deg);will-change:transform;pointer-events:none">泰源物业 2025-08-25 18:45</div>
<div class="a" style="left:572px;top:715.5px;font-size:15px;line-height:15px;color:rgba(0,0,0,0.1);transform-origin:0 100%;transform:rotate(-17.5deg);will-change:transform;pointer-events:none">泰源物业 2025-08-25 18:45</div>
<div class="a" style="left:932px;top:715.5px;font-size:15px;line-height:15px;color:rgba(0,0,0,0.1);transform-origin:0 100%;transform:rotate(-17.5deg);will-change:transform;pointer-events:none">泰源物业 2025-08-25 18:45</div>
<div class="a" style="left:1292px;top:715.5px;font-size:15px;line-height:15px;color:rgba(0,0,0,0.1);transform-origin:0 100%;transform:rotate(-17.5deg);will-change:transform;pointer-events:none">泰源物业 2025-08-25 18:45</div>
<div class="a" style="left:1652px;top:715.5px;font-size:15px;line-height:15px;color:rgba(0,0,0,0.1);transform-origin:0 100%;transform:rotate(-17.5deg);will-change:transform;pointer-events:none">泰源物业 2025-08-25 18:45</div>
<div class="a" style="left:1685px;top:263px;width:42px;height:37px;border:2px solid #ff1a1a"></div>
<svg class="a" style="left:0px;top:0px;left:0;top:0;pointer-events:none" width="1920" height="735" viewBox="0 0 1920 735"><polygon points="1660.2,308.2 1661.2,309.8 1474.6,426.7 1478.2,428.8 1466.8,431.3 1473.7,421.8 1472.8,424.3" fill="#ff1a1a"/></svg>
<div class="a" style="left:1298px;top:441.5px;font-size:24px;line-height:16px;color:#ff1a1a;font-weight:normal;line-height:30px;-webkit-text-stroke:0.4px #ff1a1a">弹出生成收据失败</div></body></html>
